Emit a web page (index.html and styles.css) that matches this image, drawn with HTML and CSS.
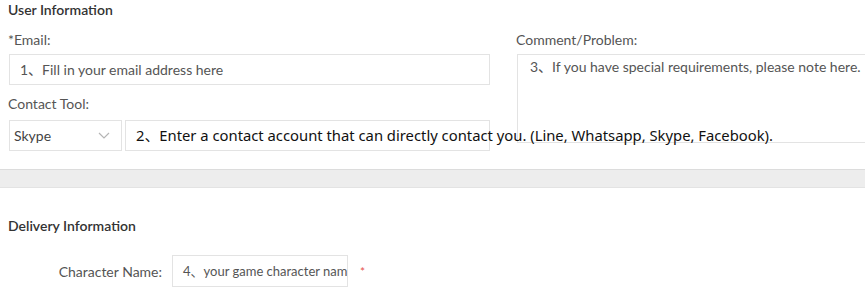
FILE: index.html
```html
<!DOCTYPE html>
<html lang="en">
<head>
<meta charset="UTF-8" />
<meta name="viewport" content="width=device-width, initial-scale=1" />
<title>Order Information</title>
<link rel="stylesheet" href="styles.css">
</head>
<body>

<section class="panel">
  <h2 class="panel-title">User Information</h2>
  <div class="user-grid">
    <div class="col-left">
      <label class="field-label">*Email:</label>
      <div class="text-box email-box">1、Fill in your email address here</div>

      <label class="field-label contact-label">Contact Tool:</label>
      <div class="contact-row">
        <div class="select-box">
          <span>Skype</span>
          <svg class="chevron" width="12" height="8" viewBox="0 0 12 8">
            <polyline points="1,1 6,6 11,1" fill="none" stroke="#b5b5b5" stroke-width="1.2" />
          </svg>
        </div>
        <div class="text-box contact-box">
          <span class="contact-hint">2、Enter a contact account that can directly contact you. (Line, Whatsapp, Skype, Facebook).</span>
        </div>
      </div>
    </div>

    <div class="col-right">
      <label class="field-label">Comment/Problem:</label>
      <div class="comment-box">3、If you have special requirements, please note here.</div>
    </div>
  </div>
</section>

<div class="divider-band"></div>

<section class="panel">
  <h2 class="panel-title delivery-title">Delivery Information</h2>
  <div class="char-row">
    <label class="char-label">Character Name:</label>
    <div class="text-box char-box">4、your game character name</div>
    <span class="required">*</span>
  </div>
</section>

</body>
</html>
```

FILE: styles.css
```css
body {
  margin: 0;
  font-family: Lato, "Noto Sans CJK SC", sans-serif;
  background: #fff;
  color: #555;
  overflow: hidden;
}
.panel {
  padding: 0 0 0 9px;
}
.panel-title {
  margin: 0;
  font-size: 14px;
  line-height: 20px;
  font-weight: 600;
  color: #333;
  margin-left: -1px;
}
.user-grid {
  display: grid;
  grid-template-columns: 481px 1fr;
  column-gap: 27px;
}
.field-label {
  display: block;
  margin-top: 10px;
  font-size: 14px;
  line-height: 20px;
  color: #555;
  margin-left: -1px;
}
.contact-label {
  margin-top: 9px;
}
.text-box {
  box-sizing: border-box;
  height: 31px;
  border: 1px solid #e3e3e3;
  font-size: 14px;
  line-height: 29px;
  white-space: nowrap;
  overflow: hidden;
}
.email-box {
  margin-top: 4px;
  padding-left: 10px;
}
.contact-row {
  display: flex;
  gap: 3px;
  margin-top: 6px;
}
.select-box {
  box-sizing: border-box;
  flex-shrink: 0;
  width: 113px;
  height: 31px;
  border: 1px solid #e3e3e3;
  display: flex;
  align-items: center;
  justify-content: space-between;
  padding: 0 11px 0 4px;
  font-size: 14px;
  color: #444;
}
.contact-box {
  flex: 1;
  min-width: 0;
  overflow: visible;
  padding-left: 10px;
}
.contact-hint {
  position: relative;
  z-index: 1;
  font-family: "Noto Sans", "Noto Sans CJK SC", sans-serif;
  font-size: 14.8px;
  color: #111;
}
.comment-box {
  box-sizing: border-box;
  margin-top: 4px;
  width: 360px;
  height: 89px;
  border: 1px solid #e3e3e3;
  padding: 2px 12px;
  font-size: 14px;
  line-height: 20px;
  white-space: nowrap;
}
.divider-band {
  margin-top: 18px;
  height: 17px;
  background: #ededed;
  border-top: 1px solid #dcdcdc;
  border-bottom: 1px solid #e3e3e3;
}
.delivery-title {
  margin-top: 28px;
}
.char-row {
  display: flex;
  align-items: center;
  margin-top: 19px;
}
.char-label {
  width: 153px;
  text-align: right;
  font-size: 14px;
  color: #555;
}
.char-box {
  width: 176px;
  height: 32px;
  margin-left: 10px;
  padding: 0 0 0 10px;
  font-size: 13px;
  line-height: 30px;
  text-overflow: clip;
}
.required {
  margin-left: 12px;
  color: #e5534b;
  font-size: 12px;
}
```
